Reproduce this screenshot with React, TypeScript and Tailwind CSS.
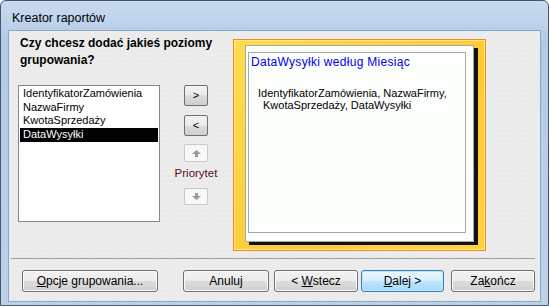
import React from "react";

const ui = { fontFamily: '"Liberation Sans", Arial, sans-serif' };

function Btn({
  children,
  w,
  primary,
}: {
  children: React.ReactNode;
  w: string;
  primary?: boolean;
}) {
  return (
    <div
      className={`${w} h-[22px] rounded-[3px] border flex items-center justify-center text-[12px] text-black ${
        primary
          ? "border-[#3c7fb1] bg-[linear-gradient(#eaf6fd_0%,#d9f0fc_50%,#bee6fd_50%,#a7d9f5_100%)] shadow-[inset_0_0_0_1px_#c4e5f6]"
          : "border-[#707070] bg-[linear-gradient(#f2f2f2_0%,#ebebeb_50%,#dddddd_50%,#cfcfcf_100%)] shadow-[inset_0_0_0_1px_#fbfbfb]"
      }`}
    >
      {children}
    </div>
  );
}

function SmallBtn({ children, disabled, h }: { children: React.ReactNode; disabled?: boolean; h: string }) {
  return (
    <div
      className={`w-[24px] ${h} rounded-[2px] border flex items-center justify-center text-[11px] ${
        disabled
          ? "border-[#c9c9c9] bg-[#f8f8f8] text-[#a0a0a0]"
          : "border-[#707070] bg-[linear-gradient(#f2f2f2_0%,#ebebeb_50%,#dddddd_50%,#cfcfcf_100%)] text-black"
      }`}
    >
      {children}
    </div>
  );
}

export default function App() {
  const fields = ["IdentyfikatorZamówienia", "NazwaFirmy", "KwotaSprzedaży", "DataWysyłki"];

  return (
    <div className="w-[549px] h-[306px] bg-white" style={ui}>
      <div className="w-full h-full border border-[#4a5566] rounded-t-[6px] bg-[linear-gradient(#c9dbf0,#b3cae6_40px,#bcd1ea)] flex flex-col px-[7px] pb-[3px]">
        {/* title bar */}
        <div className="h-[29px] pl-[4px] pt-[10px] text-[12.5px] leading-[14px] text-black">
          Kreator raportów
        </div>

        {/* content */}
        <div className="flex-1 border border-[#8fa6c4] bg-[#ebebeb] bg-[radial-gradient(#f6f6f6_0.7px,transparent_0.9px)] bg-[length:5px_5px] flex flex-col">
          <div className="flex h-[227px]">
            {/* left side */}
            <div className="w-[224px] pl-[9px]">
              <div className="mt-[4px] ml-[2px] text-[12px] font-bold leading-[17px] text-black">
                Czy chcesz dodać jakieś poziomy
                <br />
                grupowania?
              </div>
              <div className="flex mt-[16px]">
                <div className="w-[142px] h-[137px] border border-[#828790] bg-white pt-[1px] px-[1px] text-[11px]">
                  {fields.map((f, i) => (
                    <div
                      key={f}
                      className={`h-[13.7px] leading-[13.7px] pl-[3px] ${
                        i === 3 ? "bg-black text-white" : "text-black"
                      }`}
                    >
                      {f}
                    </div>
                  ))}
                </div>
                <div className="ml-[21px] w-[30px] flex flex-col items-center">
                  <div className="mt-[0px]">
                    <SmallBtn h="h-[21px]">&gt;</SmallBtn>
                  </div>
                  <div className="mt-[9px]">
                    <SmallBtn h="h-[21px]">&lt;</SmallBtn>
                  </div>
                  <div className="mt-[8px]">
                    <SmallBtn h="h-[18px]" disabled>
                      <svg width="9" height="7" viewBox="0 0 9 7">
                        <path d="M4.5 0 L9 4 L6 4 L6 7 L3 7 L3 4 L0 4 Z" fill="#9a9a9a" />
                      </svg>
                    </SmallBtn>
                  </div>
                  <div className="mt-[3px] text-[11.5px] leading-[16px] text-[#5a0a1e]">Priorytet</div>
                  <div className="mt-[7px]">
                    <SmallBtn h="h-[17px]" disabled>
                      <svg width="9" height="7" viewBox="0 0 9 7">
                        <path d="M3 0 L6 0 L6 3 L9 3 L4.5 7 L0 3 L3 3 Z" fill="#9a9a9a" />
                      </svg>
                    </SmallBtn>
                  </div>
                </div>
              </div>
            </div>

            {/* preview */}
            <div className="mt-[8px] w-[253px] h-[212px] border border-[#f5891c] bg-[linear-gradient(135deg,#ffdc4e,#ffc933_60%,#ffd23e)] shadow-[inset_0_0_0_1px_#ffe98a] pl-[11px] pr-[11px] pt-[5px] pb-[8px]">
              <div className="w-full h-full bg-[#fcfefc] border border-[#a8a8a8] shadow-[4px_3px_0_#111] pl-[2px] pr-[7px] pt-[6px] pb-[8px]">
                <div className="w-full h-full border border-[#a8a8a8] pl-[2px] pt-[1px]">
                  <div className="text-[12px] leading-[16px] text-[#0000ee] tracking-[0.3px]">
                    DataWysyłki według Miesiąc
                  </div>
                  <div className="mt-[17px] text-[11px] leading-[12px] text-black">
                    <div className="pl-[7px]">IdentyfikatorZamówienia, NazwaFirmy,</div>
                    <div className="pl-[12px]">KwotaSprzedaży, DataWysyłki</div>
                  </div>
                </div>
              </div>
            </div>
          </div>

          {/* separator */}
          <div className="ml-[2px] mr-[5px] h-[2px] border-t border-[#a0a0a0] border-b-white" />

          {/* buttons */}
          <div className="flex mt-[10px] pl-[13px]">
            <Btn w="w-[136px]">
              <span>
                <u>O</u>pcje grupowania...
              </span>
            </Btn>
            <div className="ml-[25px]">
              <Btn w="w-[86px]">Anuluj</Btn>
            </div>
            <div className="ml-[5px]">
              <Btn w="w-[84px]">
                <span>
                  &lt; <u>W</u>stecz
                </span>
              </Btn>
            </div>
            <div className="ml-[3px]">
              <Btn w="w-[83px]" primary>
                <span>
                  <u>D</u>alej &gt;
                </span>
              </Btn>
            </div>
            <div className="ml-[7px]">
              <Btn w="w-[84px]">
                <span>
                  Za<u>k</u>ończ
                </span>
              </Btn>
            </div>
          </div>
        </div>
      </div>
    </div>
  );
}
